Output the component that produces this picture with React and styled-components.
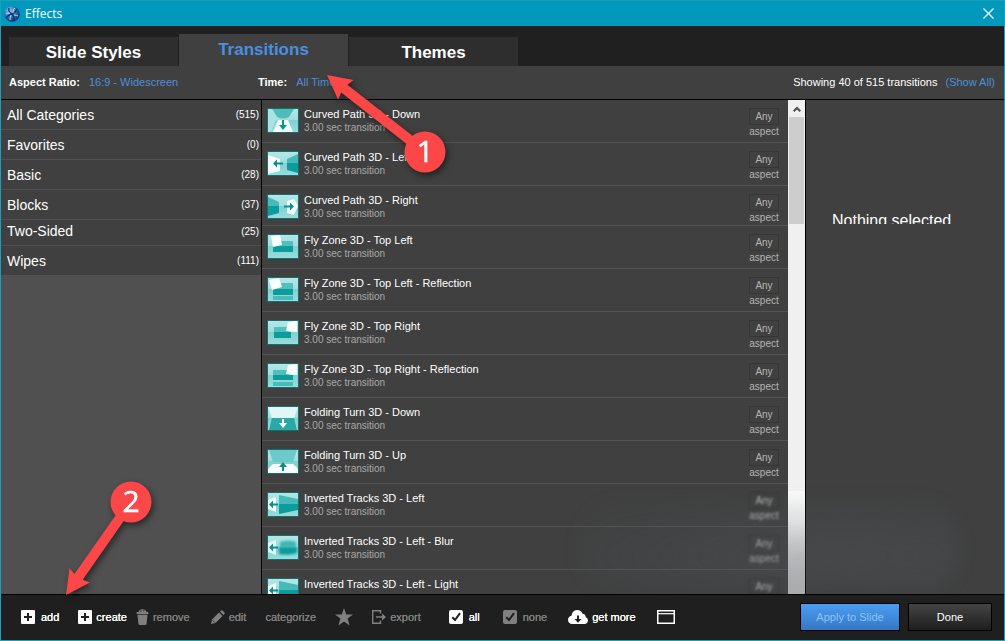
import React from 'react'
import styled, { createGlobalStyle } from 'styled-components'

const categories = [
  { name: 'All Categories', count: 515 },
  { name: 'Favorites', count: 0 },
  { name: 'Basic', count: 28 },
  { name: 'Blocks', count: 37 },
  { name: 'Two-Sided', count: 25, short: true },
  { name: 'Wipes', count: 111 },
]

const transitions = [
  { name: 'Curved Path 3D - Down', thumb: 'curvedDown' },
  { name: 'Curved Path 3D - Left', thumb: 'curvedLeft' },
  { name: 'Curved Path 3D - Right', thumb: 'curvedRight', short: true },
  { name: 'Fly Zone 3D - Top Left', thumb: 'flyLeft' },
  { name: 'Fly Zone 3D - Top Left - Reflection', thumb: 'flyLeftReflection' },
  { name: 'Fly Zone 3D - Top Right', thumb: 'flyRight' },
  { name: 'Fly Zone 3D - Top Right - Reflection', thumb: 'flyRightReflection' },
  { name: 'Folding Turn 3D - Down', thumb: 'foldDown' },
  { name: 'Folding Turn 3D - Up', thumb: 'foldUp' },
  { name: 'Inverted Tracks 3D - Left', thumb: 'tracks', smeared: true },
  { name: 'Inverted Tracks 3D - Left - Blur', thumb: 'tracksBlur', smeared: true },
  { name: 'Inverted Tracks 3D - Left - Light', thumb: 'tracks', smeared: true, partial: true },
]

const arrowLeft = 'M2 12.500L6 8.500V11.500H11V13.500H6V16.500Z'

const thumbs = {
  curvedDown: (
    <>
      <path d="M5 1H27L22 9Q16 12 10 9Z" fill="#4fbcbc" />
      <path d="M1 1H5L10 9L4 24H1Z" fill="#a9e2e2" />
      <path d="M11 12H21L26 24H6Z" fill="#f2fcfc" />
      <path d="M15 12H17V17H20L16 22L12 17H15Z" fill="#0f9292" />
    </>
  ),
  curvedLeft: (
    <>
      <path d="M1 4L13 8V20L1 23Z" fill="#f4fdfd" />
      <path d="M20 8L31 3V12H20Z" fill="#46b9b9" />
      <path d="M20 12H31V22L20 19Z" fill="#0c9c9c" />
      <path d="M6 12.500L10 8.500V11.500H16V13.500H10V16.500Z" fill="#118c8c" />
    </>
  ),
  curvedRight: (
    <>
      <path d="M1 3L12 8V12H1Z" fill="#46b9b9" />
      <path d="M1 12H12V19L1 22Z" fill="#0c9c9c" />
      <path d="M20 7L27 5L31 12L27 21L20 19Z" fill="#f4fdfd" />
      <path d="M27 12.500L23 8.500V11.500H17V13.500H23V16.500Z" fill="#118c8c" />
    </>
  ),
  flyLeft: (
    <>
      <path d="M6 12H26V18H6Z" fill="#0c9c9c" />
      <path d="M14 7H26V12H6V9Z" fill="#52bfbf" />
      <path d="M4 2L13 1L15 11L6 13Z" fill="#f8fefe" />
    </>
  ),
  flyLeftReflection: (
    <>
      <path d="M6 12H26V18H6Z" fill="#0c9c9c" />
      <path d="M12 6H26V12H6V9Z" fill="#52bfbf" />
      <path d="M6 19H26V23H6Z" fill="#4bbaba" />
      <path d="M2 3L12 1L15 10L5 13Z" fill="#f8fefe" />
    </>
  ),
  flyRight: (
    <>
      <path d="M7 12H24V18H7Z" fill="#0c9c9c" />
      <path d="M7 7H22V12H7Z" fill="#52bfbf" />
      <path d="M21 2L30 1V12L19 11Z" fill="#f8fefe" />
    </>
  ),
  flyRightReflection: (
    <>
      <path d="M6 12H26V17H6Z" fill="#0c9c9c" />
      <path d="M6 7H22V12H6Z" fill="#52bfbf" />
      <path d="M6 19H26V23H6Z" fill="#4bbaba" />
      <path d="M21 2L30 1V12L19 11Z" fill="#f8fefe" />
    </>
  ),
  foldDown: (
    <>
      <path d="M1 1H31L27 12H5Z" fill="#e2f6f6" />
      <path d="M5 12H27L30 24H2Z" fill="#2aa8a8" />
      <path d="M15 13H17V17H20L16 22L12 17H15Z" fill="#f8fefe" />
    </>
  ),
  foldUp: (
    <>
      <path d="M2 1H30L26 13H6Z" fill="#6ccaca" />
      <path d="M1 24V20L6 15H26L31 20V24Z" fill="#f8fefe" />
      <path d="M15 22H17V18H20L16 13L12 18H15Z" fill="#118c8c" />
    </>
  ),
  tracks: (
    <>
      <path d="M1 8L9 5V20L1 17Z" fill="#f4fdfd" />
      <path d="M12 3L31 7V12H12Z" fill="#46b9b9" />
      <path d="M12 12H31V18L12 22Z" fill="#0c9c9c" />
      <path d={arrowLeft} fill="#118c8c" />
    </>
  ),
  tracksBlur: (
    <>
      <path d="M1 8L9 5V20L1 17Z" fill="#e2f8f8" />
      <path d="M13 7Q22 4 29 7V12H13Z" fill="#3fb5b5" filter="url(#thumbSoft)" />
      <path d="M12 12H30V18Q22 21 12 19Z" fill="#0c9c9c" filter="url(#thumbSoft)" />
      <path d={arrowLeft} fill="#118c8c" />
    </>
  ),
}

function Thumb({ kind }) {
  return (
    <ThumbSvg viewBox="0 0 32 25" aria-hidden="true">
      <defs>
        <linearGradient id="thumbBack" x1="0" y1="0" x2="0" y2="1">
          <stop offset="0" stopColor="#b4e6e6" />
          <stop offset="0.480" stopColor="#a0dede" />
          <stop offset="0.500" stopColor="#7fd0d0" />
          <stop offset="1" stopColor="#98dddd" />
        </linearGradient>
        <filter id="thumbSoft">
          <feGaussianBlur stdDeviation="1.200" />
        </filter>
      </defs>
      <rect width="32" height="25" fill="#156e70" />
      <rect x="1" y="1" width="30" height="23" fill="url(#thumbBack)" />
      {thumbs[kind]}
    </ThumbSvg>
  )
}

function Logo() {
  return (
    <svg width="16" height="16" viewBox="0 0 16 16" aria-hidden="true">
      <defs>
        <radialGradient id="logoFill" cx="0.350" cy="0.300" r="0.750">
          <stop offset="0" stopColor="#8fc6ef" />
          <stop offset="0.550" stopColor="#2c6eb5" />
          <stop offset="1" stopColor="#0d2f6e" />
        </radialGradient>
      </defs>
      <circle cx="8" cy="8" r="7.800" fill="url(#logoFill)" />
      <path d="M8 8Q4 6 5 2M8 8Q12 6 13 3M8 8Q11 11 9 15M8 8Q4 9 2 12" fill="none" stroke="#0c356f" strokeWidth="1.300" />
      <path d="M9 7Q9 3 11 2M7 9Q6 12 6 14M10 9Q13 9 14 10M6 7Q3 7 2 8" fill="none" stroke="#b5dcf7" strokeWidth="1" />
    </svg>
  )
}

function PlusIcon() {
  return (
    <svg width="14" height="14" viewBox="0 0 14 14" aria-hidden="true">
      <rect width="14" height="14" rx="1" fill="currentColor" />
      <path d="M6 3H8V6H11V8H8V11H6V8H3V6H6Z" fill="#1f1f1f" />
    </svg>
  )
}

function TrashIcon() {
  return (
    <svg width="13" height="16" viewBox="0 0 13 16" aria-hidden="true">
      <path d="M2.500 3Q3.500 .2 6.500 .2T10.500 3Z" fill="currentColor" />
      <circle cx="5" cy="2.200" r="0.600" fill="#1f1f1f" />
      <circle cx="7.800" cy="1.800" r="0.600" fill="#1f1f1f" />
      <rect x="0.500" y="3" width="12" height="2.200" rx="1" fill="currentColor" />
      <path d="M1.500 6H11.500L10.600 14.500Q10.500 16 9 16H4Q2.500 16 2.400 14.500Z" fill="currentColor" />
    </svg>
  )
}

function PencilIcon() {
  return (
    <svg width="14" height="14" viewBox="0 0 14 14" aria-hidden="true">
      <path d="M0 14L1 9.500L8 2.500L11.500 6L4.500 13Z" fill="currentColor" />
      <path d="M9 1.500L10.200 .4Q10.800 -.1 11.500 .5L13.500 2.500Q14.100 3.200 13.500 3.800L12.400 5Z" fill="currentColor" />
      <path d="M1.600 10.400L3.600 12.400" stroke="#1f1f1f" strokeWidth="0.700" />
    </svg>
  )
}

function StarIcon() {
  return (
    <svg width="18" height="18" viewBox="0 0 18 18" aria-hidden="true">
      <path d="M9 0L11.200 6.500H18L12.600 10.600L14.600 17.500L9 13.400L3.400 17.500L5.400 10.600L0 6.500H6.800Z" fill="currentColor" />
    </svg>
  )
}

function ExportIcon() {
  return (
    <svg width="14" height="14" viewBox="0 0 14 14" aria-hidden="true">
      <path d="M8.500 3.500V.7H.7V13.300H8.500V10.500" fill="none" stroke="currentColor" strokeWidth="1.400" />
      <path d="M4 6.200H10V3.600L14 7L10 10.400V7.800H4Z" fill="currentColor" />
    </svg>
  )
}

function CloudIcon() {
  return (
    <svg width="20" height="14" viewBox="0 0 20 14" aria-hidden="true">
      <path d="M4.500 14Q0 13.600 0 9.700Q.2 6.600 3.500 5.800Q4 .4 9 0Q13.200 0 14.600 3.800Q17.200 3.900 17.700 7Q20 8.100 20 10.500Q19.700 13.600 16.500 14Z" fill="currentColor" />
      <path d="M9 5.500H11V9H13.500L10 12.700L6.500 9H9Z" fill="#1f1f1f" />
    </svg>
  )
}

function WindowIcon() {
  return (
    <svg width="18" height="14" viewBox="0 0 18 14" aria-hidden="true">
      <rect x="0.750" y="0.750" width="16.500" height="12.500" fill="none" stroke="currentColor" strokeWidth="1.500" />
      <path d="M1 3.700H17" stroke="currentColor" strokeWidth="1.200" />
    </svg>
  )
}

function Check({ label, defaultChecked, muted }) {
  return (
    <CheckLabel $muted={muted}>
      <CheckSlot>
        <CheckInput type="checkbox" defaultChecked={defaultChecked} />
        <svg width="14" height="14" viewBox="0 0 14 14" aria-hidden="true">
          <path d="M3.300 7.300L6 10L11 3.200" fill="none" stroke="#1f1f1f" strokeWidth="2" />
        </svg>
      </CheckSlot>
      <span>{label}</span>
    </CheckLabel>
  )
}

function Callout({ number, x, y, tipX, tipY }) {
  const angle = (Math.atan2(y - tipY, x - tipX) * 180) / Math.PI
  const length = Math.hypot(x - tipX, y - tipY)
  return (
    <g>
      <path
        d={`M0 0L24 -12.500L22 -5H${length}V5H22L24 12.500Z`}
        transform={`translate(${tipX} ${tipY}) rotate(${angle})`}
        fill="#fb4747"
      />
      <circle cx={x} cy={y} r="20.500" fill="#fb4747" />
      <text x={x} y={y + 10} textAnchor="middle">{number}</text>
    </g>
  )
}

function App() {
  return (
    <>
      <GlobalStyle />
      <Window>
        <TitleBar>
          <Logo />
          <WindowTitle>Effects</WindowTitle>
          <CloseButton aria-label="Close">
            <svg width="11" height="11" viewBox="0 0 11 11" aria-hidden="true">
              <path d="M.5 .5L10.500 10.500M10.500 .5L.5 10.500" stroke="#fff" strokeWidth="1.200" />
            </svg>
          </CloseButton>
        </TitleBar>

        <TabBar role="tablist">
          <Tab role="tab" aria-selected="false">Slide Styles</Tab>
          <Tab role="tab" aria-selected="true" $active>Transitions</Tab>
          <Tab role="tab" aria-selected="false">Themes</Tab>
        </TabBar>

        <FilterBar>
          <Filter>
            <b>Aspect Ratio:</b>
            <FilterLink href="#aspect">16:9 - Widescreen</FilterLink>
          </Filter>
          <Filter>
            <b>Time:</b>
            <FilterLink href="#time">All Times</FilterLink>
          </Filter>
          <Summary>
            <span>Showing 40 of 515 transitions</span>
            <FilterLink href="#all">(Show All)</FilterLink>
          </Summary>
        </FilterBar>

        <Body>
          <Sidebar>
            {categories.map((category) => (
              <Category key={category.name} $short={category.short}>
                <span>{category.name}</span>
                <Count>({category.count})</Count>
              </Category>
            ))}
          </Sidebar>
          <List>
            {transitions.map((item) => (
              <Row key={item.name} $short={item.short}>
                <Thumb kind={item.thumb} />
                <RowText>
                  <RowTitle>{item.name}</RowTitle>
                  {item.partial || <RowDetail>3.00 sec transition</RowDetail>}
                </RowText>
                <Aspect $smeared={item.smeared}>
                  <AspectBox>Any</AspectBox>
                  {item.partial || <span>aspect</span>}
                </Aspect>
              </Row>
            ))}
          </List>
          <ScrollTrack>
            <ScrollButton aria-label="Scroll up">
              <svg width="8" height="6" viewBox="0 0 8 6" aria-hidden="true">
                <path d="M.7 5.300L4 2L7.300 5.300" fill="none" stroke="#505050" strokeWidth="2" />
              </svg>
            </ScrollButton>
            <ScrollThumb />
            <ScrollFade />
          </ScrollTrack>
          <Details>
            <Empty>Nothing selected</Empty>
          </Details>
          <Haze />
        </Body>

        <Footer>
          <Tools>
            <Tool $gap={6}><PlusIcon />add</Tool>
            <Tool $gap={4} $space={19}><PlusIcon />create</Tool>
            <Tool $gap={4} $space={9} $muted><TrashIcon />remove</Tool>
            <Tool $gap={4} $space={21} $muted><PencilIcon />edit</Tool>
            <Tool $space={19} $muted>categorize</Tool>
            <Tool $space={19} $muted aria-label="Favorite"><StarIcon /></Tool>
            <Tool $gap={4} $space={19} $muted><ExportIcon />export</Tool>
            <Check label="all" defaultChecked />
            <Check label="none" defaultChecked muted />
            <Tool $gap={4} $space={21}><CloudIcon />get more</Tool>
            <Tool $space={21} aria-label="Window"><WindowIcon /></Tool>
          </Tools>
          <Actions>
            <ActionButton $primary>Apply to Slide</ActionButton>
            <ActionButton>Done</ActionButton>
          </Actions>
        </Footer>

        <Callouts width="460" height="610" aria-hidden="true">
          <Callout number="1" x={425} y={152} tipX={327} tipY={75} />
          <Callout number="2" x={131} y={502} tipX={66} tipY={595} />
        </Callouts>
      </Window>
    </>
  )
}

export default App

const GlobalStyle = createGlobalStyle`
  * {
    box-sizing: border-box;
  }
  body {
    margin: 0;
    background: #404040;
    color: #fff;
    font-family: "Liberation Sans", Arial, sans-serif;
    font-size: 11px;
  }
  button {
    margin: 0;
    padding: 0;
    border: 0;
    background: none;
    color: inherit;
    font: inherit;
  }
  svg {
    flex: none;
    display: block;
  }
`;

const Window = styled.div`
  position: relative;
  display: flex;
  flex-direction: column;
  height: 100vh;
  border: 1px solid #1c9fba;
  overflow: hidden;
`;

const TitleBar = styled.header`
  flex: none;
  display: flex;
  align-items: center;
  gap: 5px;
  height: 25px;
  padding: 0 10px 0 3px;
  background: #0099bc;
`;

const WindowTitle = styled.h1`
  flex: 1;
  margin: 0;
  font-family: "Open Sans", "Noto Sans", sans-serif;
  font-size: 12px;
  font-weight: normal;
`;

const CloseButton = styled.button`
  display: flex;
`;

const TabBar = styled.div`
  flex: none;
  display: flex;
  align-items: flex-end;
  gap: 1px;
  height: 40px;
  padding-left: 8px;
  background: #202020;
`;

const Tab = styled.button`
  width: 169px;
  height: ${(props) => (props.$active ? 32 : 29)}px;
  padding-top: ${(props) => (props.$active ? 0 : 2)}px;
  background: ${(props) => (props.$active ? '#404040' : '#2e2e2e')};
  color: ${(props) => (props.$active ? '#4a90e2' : '#fff')};
  font-size: 17px;
  font-weight: bold;
`;

const FilterBar = styled.div`
  flex: none;
  display: flex;
  align-items: center;
  height: 34px;
  padding: 0 9px 2px 8px;
  border-bottom: 1px solid #000;
`;

const Filter = styled.div`
  display: flex;
  gap: 9px;
  min-width: 249px;
`;

const FilterLink = styled.a`
  color: #4c8fdb;
  text-decoration: none;
`;

const Summary = styled.div`
  display: flex;
  gap: 8px;
  margin-left: auto;
`;

const Body = styled.main`
  position: relative;
  flex: 1;
  display: flex;
  min-height: 0;
  overflow: hidden;
`;

const Sidebar = styled.ul`
  flex: none;
  width: 261px;
  margin: 0;
  padding: 0;
  border-right: 1px solid #000;
  background: #505050;
  list-style: none;
`;

const Category = styled.li`
  display: flex;
  align-items: center;
  justify-content: space-between;
  height: ${(props) => (props.$short ? 26 : 30)}px;
  padding: 0 2px ${(props) => (props.$short ? 3 : 0)}px 6px;
  border-bottom: 1px solid #515151;
  background: #404040;
  font-size: 14px;
`;

const Count = styled.span`
  font-size: 10px;
`;

const List = styled.ul`
  flex: 1;
  min-width: 0;
  margin: 0;
  padding: 0;
  list-style: none;
`;

const Row = styled.li`
  display: flex;
  gap: 5px;
  height: ${(props) => (props.$short ? 40 : 43)}px;
  padding: 7px 8px 0 5px;
  border-bottom: 1px solid #535353;
`;

const ThumbSvg = styled.svg`
  width: 32px;
  height: 25px;
  margin-top: 1px;
`;

const RowText = styled.div`
  flex: 1;
`;

const RowTitle = styled.div`
  line-height: 14px;
`;

const RowDetail = styled.div`
  color: #a9a9a9;
  font-size: 10px;
  line-height: 13px;
`;

const Aspect = styled.div`
  display: flex;
  flex-direction: column;
  align-items: center;
  width: 32px;
  padding-top: 1px;
  color: #b5b5b5;
  font-size: 10px;
  line-height: 14px;
  filter: ${(props) => (props.$smeared ? 'blur(1px)' : 'none')};
`;

const AspectBox = styled.span`
  width: 30px;
  border: 1px solid #363636;
  line-height: 15px;
  text-align: center;
`;

const ScrollTrack = styled.div`
  flex: none;
  display: flex;
  flex-direction: column;
  width: 17px;
  background: #f0f0f0;
`;

const ScrollButton = styled.button`
  display: flex;
  align-items: center;
  justify-content: center;
  height: 17px;
`;

const ScrollThumb = styled.div`
  height: 107px;
  margin: 0 1px;
  background: #cdcdcd;
`;

const ScrollFade = styled.div`
  height: 103px;
  margin-top: auto;
  background: linear-gradient(#fafafa 30%, #b4b4b6);
`;

const Details = styled.section`
  flex: none;
  width: 199px;
  border-left: 1px solid #000;
`;

const Empty = styled.p`
  height: 124px;
  margin: 0;
  padding: 112px 0 0 26px;
  overflow: hidden;
  font-size: 16px;
  line-height: 18px;
`;

const Haze = styled.div`
  position: absolute;
  right: 45px;
  bottom: 0;
  width: 380px;
  height: 94px;
  border-radius: 40px;
  background: radial-gradient(ellipse at 70% 60%, rgba(84, 92, 100, 0.3), rgba(84, 92, 100, 0.05) 80%);
  filter: blur(8px);
  pointer-events: none;
`;

const Footer = styled.footer`
  flex: none;
  display: flex;
  align-items: center;
  justify-content: space-between;
  height: 46px;
  padding: 0 12px 2px 20px;
  border-top: 1px solid #000;
  background: #1f1f1f;
`;

const Tools = styled.div`
  display: flex;
  align-items: center;
`;

const Tool = styled.button`
  display: flex;
  align-items: center;
  gap: ${(props) => props.$gap || 0}px;
  margin-left: ${(props) => props.$space || 0}px;
  color: ${(props) => (props.$muted ? '#808080' : '#fff')};
  text-shadow: 0 0 0 currentColor;
`;

const CheckLabel = styled.label`
  display: flex;
  align-items: center;
  gap: 6px;
  margin-left: ${(props) => (props.$muted ? 23 : 28)}px;
  color: ${(props) => (props.$muted ? '#808080' : '#fff')};
  text-shadow: 0 0 0 currentColor;
`;

const CheckSlot = styled.span`
  display: grid;
  > * {
    grid-area: 1 / 1;
  }
  svg {
    z-index: 1;
    pointer-events: none;
    visibility: hidden;
  }
  input:checked + svg {
    visibility: visible;
  }
`;

const CheckInput = styled.input`
  appearance: none;
  width: 14px;
  height: 14px;
  margin: 0;
  border-radius: 2px;
  background: currentColor;
  color: inherit;
`;

const Actions = styled.div`
  display: flex;
  gap: 8px;
`;

const ActionButton = styled.button`
  width: ${(props) => (props.$primary ? 100 : 84)}px;
  height: 28px;
  border: 1px solid #000;
  background: ${(props) => (props.$primary ? 'linear-gradient(#4b9df3, #3578c4)' : 'linear-gradient(#444, #1e1e1e)')};
  color: ${(props) => (props.$primary ? '#8fc3f8' : '#fff')};
`;

const Callouts = styled.svg`
  position: absolute;
  top: -1px;
  left: -1px;
  pointer-events: none;
  filter: drop-shadow(2px 3px 3px rgba(0, 0, 0, 0.5));
  text {
    fill: #fff;
    stroke: #fff;
    stroke-width: 0.500;
    font-family: "Open Sans", "Noto Sans", sans-serif;
    font-size: 30px;
  }
`;
